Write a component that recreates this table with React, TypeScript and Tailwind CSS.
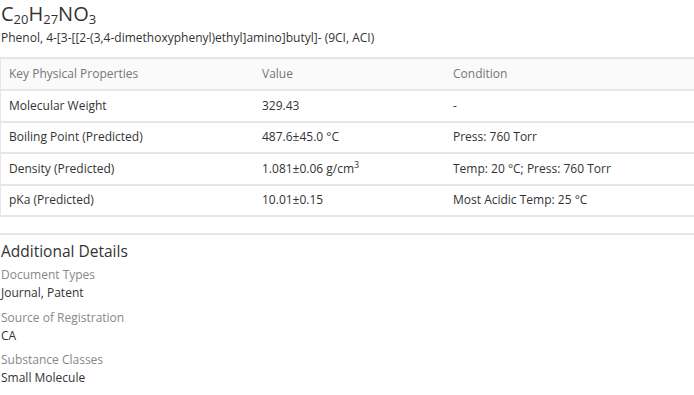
import React from "react";

const rows: { k: string; v: React.ReactNode; c: string }[] = [
  { k: "Molecular Weight", v: "329.43", c: "-" },
  { k: "Boiling Point (Predicted)", v: "487.6±45.0 °C", c: "Press: 760 Torr" },
  {
    k: "Density (Predicted)",
    v: (
      <>
        1.081±0.06 g/cm<sup className="text-[9px] leading-none align-[5px] static">3</sup>
      </>
    ),
    c: "Temp: 20 °C; Press: 760 Torr",
  },
  { k: "pKa (Predicted)", v: "10.01±0.15", c: "Most Acidic Temp: 25 °C" },
];

export default function App() {
  return (
    <div
      className="w-[694px] h-[395px] bg-white overflow-hidden text-[#333]"
      style={{ fontFamily: '"Open Sans", sans-serif' }}
    >
      <div className="h-[27px] text-[20px] leading-[27px] pl-[1px] text-[#333]">
        C<sub className="text-[13px] leading-none align-[-3px] static">20</sub>H
        <sub className="text-[13px] leading-none align-[-3px] static">27</sub>NO
        <sub className="text-[13px] leading-none align-[-3px] static">3</sub>
      </div>
      <div className="h-[20px] text-[12px] leading-[20px] pl-[1px] mt-[1px] text-[#333]">
        Phenol, 4-[3-[[2-(3,4-dimethoxyphenyl)ethyl]amino]butyl]- (9CI, ACI)
      </div>
      <div className="mt-[9px] w-[720px] border-l border-[#e6e6e6] border-t-2 text-[12px]">
        <div className="flex h-[32px] items-center bg-[#fafafa] border-b-2 border-[#e6e6e6] text-[#777]">
          <div className="w-[253px] pl-[8px]">Key Physical Properties</div>
          <div className="w-[191px] pl-[8px]">Value</div>
          <div className="flex-1 pl-[8px]">Condition</div>
        </div>
        {rows.map((r, i) => (
          <div
            key={i}
            className="flex h-[31.5px] items-center border-b-2 border-[#e6e6e6] text-[#333]"
          >
            <div className="w-[253px] pl-[8px]">{r.k}</div>
            <div className="w-[191px] pl-[8px]">{r.v}</div>
            <div className="flex-1 pl-[8px]">{r.c}</div>
          </div>
        ))}
      </div>
      <div className="mt-[16px] h-[2px] bg-[#e6e6e6] w-full" />
      <div className="mt-[5px] text-[15.5px] leading-[22px] pl-[1px] text-[#333]">
        Additional Details
      </div>
      <div className="pl-[1px] text-[12px] mt-[4px]">
        <div className="text-[#888] leading-[18px]">Document Types</div>
        <div className="text-[#333] leading-[18px]">Journal, Patent</div>
        <div className="text-[#888] leading-[18px] mt-[7px]">Source of Registration</div>
        <div className="text-[#333] leading-[18px]">CA</div>
        <div className="text-[#888] leading-[18px] mt-[6px]">Substance Classes</div>
        <div className="text-[#333] leading-[18px]">Small Molecule</div>
      </div>
    </div>
  );
}
